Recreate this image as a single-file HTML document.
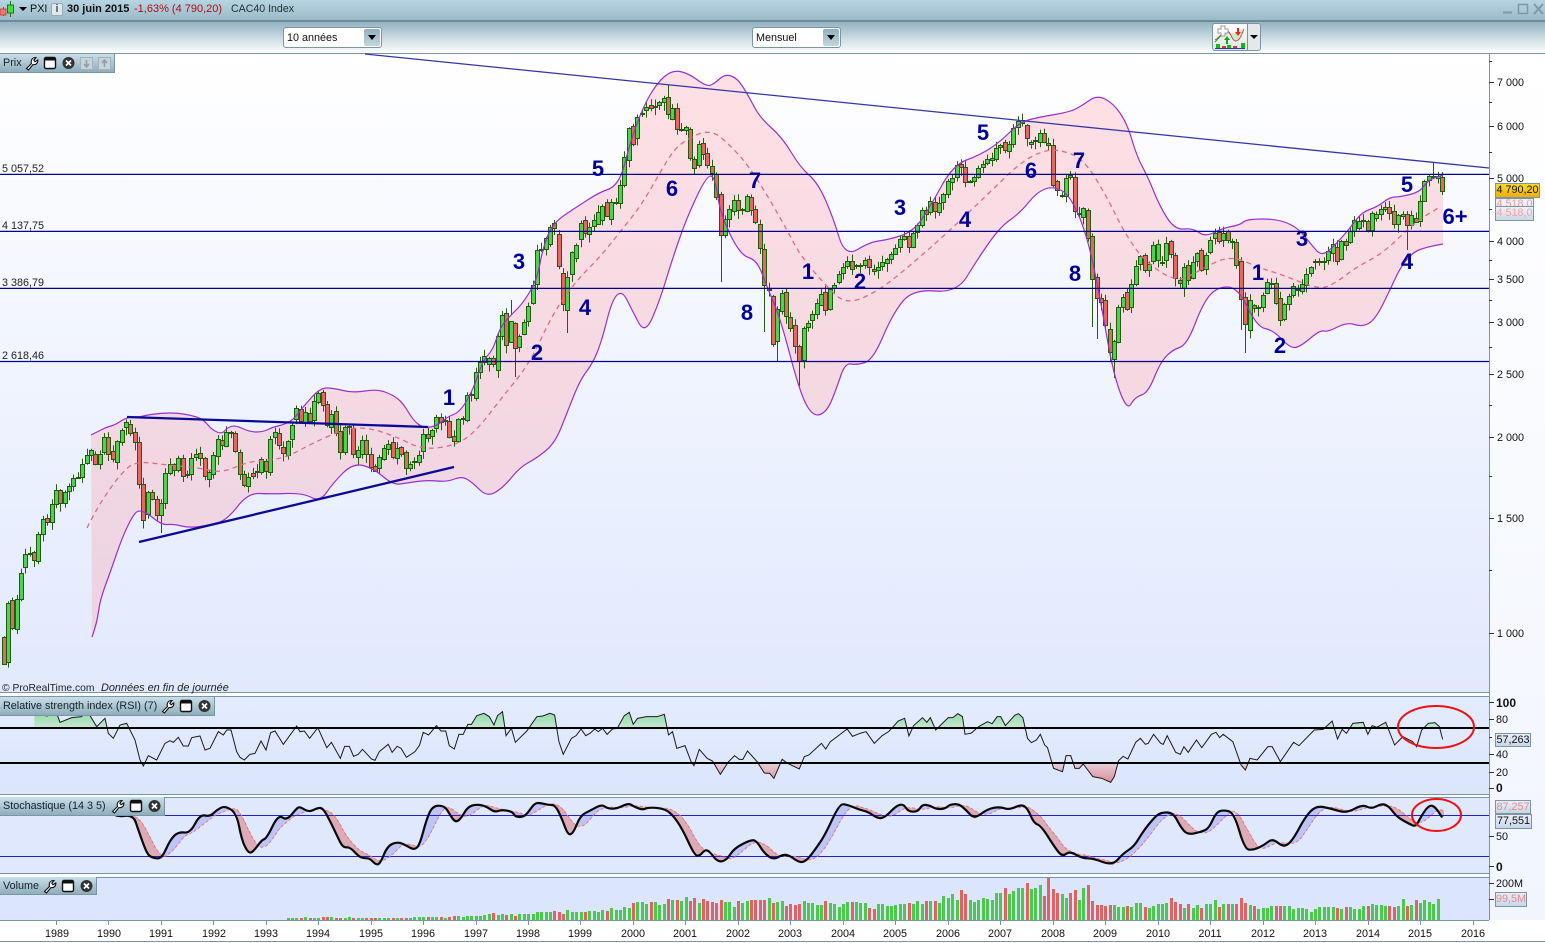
<!DOCTYPE html>
<html lang="fr"><head><meta charset="utf-8"><title>PXI CAC40 Index</title>
<style>
html,body{margin:0;padding:0;background:#fff}
body{width:1545px;height:943px;position:relative;overflow:hidden;font-family:"Liberation Sans",Arial,sans-serif;font-size:10.8px;color:#111}
.a{position:absolute}
#top{left:0;top:0;width:1545px;height:20px;background:linear-gradient(#b6d4e2,#9dbac8);border-bottom:2px solid #6f8a98}
#bar{left:0;top:22px;width:1545px;height:31px;background:linear-gradient(#94b2c1,#c4d6de 45%,#fff)}
.t{position:absolute;top:3px;white-space:nowrap;line-height:13px}
.sel{position:absolute;top:27px;height:19px;background:#fff;border:1px solid #7a95a3;border-radius:3px;line-height:21px;text-indent:3px}
.sel i{position:absolute;right:1px;top:1px;width:16px;height:17px;background:linear-gradient(#8fb0c0,#c3d6df);border-radius:2px}
.sel i:after{content:"";position:absolute;left:4px;top:6px;border:4px solid transparent;border-top:5px solid #000;border-bottom:0}
.lab{position:absolute;left:0;height:18px;background:linear-gradient(#c9dfe9,#8fadbc);border-right:1px solid #7a95a3;border-bottom:1px solid #7a95a3;line-height:19px;text-indent:3px;white-space:nowrap;color:#14242c}
.lab svg{position:absolute;top:2px;left:0;text-indent:0}
.box{position:absolute;border:1px solid #7a95a3;background:linear-gradient(#e9eff9,#c8d6e6);line-height:13px;text-align:center;white-space:nowrap}
</style></head>
<body>
<svg class="a" id="s" style="left:0;top:0" width="1545" height="943" viewBox="0 0 1545 943" font-family="Liberation Sans, Arial, sans-serif">
<defs>
<linearGradient id="gp" x1="0" y1="0" x2="0" y2="1"><stop offset="0" stop-color="#fff"/><stop offset="1" stop-color="#e1e9fd"/></linearGradient>
<linearGradient id="gr" x1="0" y1="0" x2="0" y2="1"><stop offset="0" stop-color="#e3ecff"/><stop offset="1" stop-color="#dbe5fb"/></linearGradient>
<linearGradient id="gx" x1="0" y1="0" x2="0" y2="1"><stop offset="0" stop-color="#fff"/><stop offset="1" stop-color="#f1f5fe"/></linearGradient>
<linearGradient id="gg" gradientUnits="userSpaceOnUse" x1="0" y1="712" x2="0" y2="728"><stop offset="0" stop-color="#92d9a6"/><stop offset="1" stop-color="#c4e8d2"/></linearGradient>
<linearGradient id="gd" gradientUnits="userSpaceOnUse" x1="0" y1="763" x2="0" y2="782"><stop offset="0" stop-color="#e6cfdc"/><stop offset="1" stop-color="#dc8f99"/></linearGradient>
<clipPath id="cu"><rect x="0" y="697" width="1489" height="31"/></clipPath>
<clipPath id="cd"><rect x="0" y="763" width="1489" height="31"/></clipPath>
<g id="wr"><path d="M1.5 12.5L6.5 7.5C5.5 4.5 7 1.5 11 1.5L8.8 4.2 10 5.8 12.8 4C13 7.5 10.5 9.2 8 8.5L3.5 14Z" fill="#fff" stroke="#111" stroke-width="1.1"/></g>
<g id="wn"><rect x=".5" y="1.5" width="11" height="11" rx="1.5" fill="#fff" stroke="#111" stroke-width="1.4"/><rect x="1" y="2" width="10" height="2.5" fill="#111"/></g>
<g id="xx"><circle cx="6.5" cy="7" r="6" fill="#333"/><path d="M4 4.5L9 9.5M9 4.5L4 9.5" stroke="#fff" stroke-width="1.8"/></g>
</defs>
<rect x="0" y="53" width="1545" height="889" fill="#fff"/>
<rect x="0" y="54" width="1489" height="638" fill="url(#gp)"/>
<rect x="1490" y="54" width="55" height="866" fill="url(#gx)"/>
<rect x="0" y="697" width="1489" height="97" fill="url(#gr)"/>
<rect x="0" y="798" width="1489" height="75" fill="#dfe8fd"/>
<rect x="0" y="878" width="1489" height="42" fill="#dbe5fc"/>
<g fill="none" stroke="#7a95a3" stroke-width="1">
<path d="M0 53.5H1545M1489.5 54V920M0 692.5H1489M0 696.5H1489M0 794.5H1489M0 797.5H1489M0 873.5H1489M0 877.5H1489M0 920.5H1489M0 941.5H1545"/>
</g>
<g id="fill"></g><g id="cand"></g><g id="bands"></g>
<g stroke="#00008b" stroke-width="1.2"><path d="M0 174.4H1489M0 231.4H1489M0 288.4H1489M0 361.5H1489"/></g>
<path d="M365 54L1489 168" stroke="#3434a8" stroke-width="1.3"/>
<path d="M127 417L428 427" stroke="#0a0a96" stroke-width="2.3"/>
<path d="M139 542L454 467" stroke="#0a0a96" stroke-width="2.3"/>
<g fill="#222" font-size="10.8">
<text x="2" y="172">5 057,52</text><text x="2" y="229">4 137,75</text><text x="2" y="286">3 386,79</text><text x="2" y="359">2 618,46</text>
</g>
<g font-weight="bold" font-size="22" fill="#00009a" text-anchor="middle">
<text x="598" y="176">5</text><text x="672" y="196">6</text><text x="755" y="188">7</text><text x="519" y="269">3</text><text x="585" y="315">4</text><text x="537" y="360">2</text><text x="449" y="405">1</text><text x="747" y="320">8</text><text x="808" y="279">1</text><text x="860" y="289">2</text><text x="900" y="215">3</text><text x="965" y="227">4</text><text x="983" y="140">5</text><text x="1031" y="178">6</text><text x="1079" y="168">7</text><text x="1075" y="281">8</text><text x="1302" y="246">3</text><text x="1258" y="280">1</text><text x="1280" y="353">2</text><text x="1407" y="192">5</text><text x="1407" y="269">4</text><text x="1455" y="224">6+</text>
</g>
<text x="2" y="691" font-size="10.3" fill="#222">© ProRealTime.com</text>
<text x="101" y="691" font-size="10.9" fill="#222" font-style="italic">Données en fin de journée</text>
<g id="rsi"></g>
<path d="M0 728H1489M0 763H1489" stroke="#000" stroke-width="2"/>
<g id="stf"></g>
<path d="M0 815.5H1489M0 856.5H1489" stroke="#2222cc" stroke-width="1"/>
<g id="st"></g>
<g id="vol"></g>
<ellipse cx="1436" cy="727" rx="38" ry="21" fill="none" stroke="#ee1111" stroke-width="2"/>
<ellipse cx="1436.5" cy="815" rx="24.5" ry="16" fill="none" stroke="#ee1111" stroke-width="2"/>
<g stroke="#333" stroke-width="1" fill="none">
<path d="M1489 82.5h5M1489 126.5h5M1489 178.5h5M1489 241.5h5M1489 279.5h5M1489 322.5h5M1489 374.5h5M1489 437.5h5M1489 518.5h5M1489 633.5h5M1489 61.5h3M1489 102.5h3M1489 152.5h3M1489 209.5h3M1489 260.5h3M1489 300.5h3M1489 347.5h3M1489 405.5h3M1489 476.5h3M1489 570.5h3"/>
<path d="M1489 702.5h5M1489 719.5h5M1489 737.5h3M1489 754.5h5M1489 772.5h5M1489 788.5h5M1489 836.5h5M1489 866.5h5M1489 883.5h5M1489 899.5h5"/>
</g>
<g font-size="10.8" fill="#111">
<text x="1497" y="86">7 000</text><text x="1497" y="130">6 000</text><text x="1497" y="182">5 000</text><text x="1497" y="245">4 000</text><text x="1497" y="283">3 500</text><text x="1497" y="326">3 000</text><text x="1497" y="378">2 500</text><text x="1497" y="441">2 000</text><text x="1497" y="522">1 500</text><text x="1497" y="637">1 000</text>
<text x="1496" y="707" font-weight="bold" font-size="12">100</text><text x="1496" y="723">80</text><text x="1496" y="758">40</text><text x="1496" y="776">20</text><text x="1496" y="792" font-weight="bold" font-size="12">0</text>
<text x="1496" y="840">50</text><text x="1496" y="871" font-weight="bold" font-size="12">0</text><text x="1496" y="887">200M</text>
</g>
<g font-size="10.8" fill="#111" text-anchor="middle">
<text x="57" y="937">1989</text><text x="109" y="937">1990</text><text x="161" y="937">1991</text><text x="214" y="937">1992</text><text x="266" y="937">1993</text><text x="318" y="937">1994</text><text x="371" y="937">1995</text><text x="423" y="937">1996</text><text x="476" y="937">1997</text><text x="528" y="937">1998</text><text x="580" y="937">1999</text><text x="633" y="937">2000</text><text x="685" y="937">2001</text><text x="738" y="937">2002</text><text x="790" y="937">2003</text><text x="843" y="937">2004</text><text x="895" y="937">2005</text><text x="948" y="937">2006</text><text x="1000" y="937">2007</text><text x="1053" y="937">2008</text><text x="1105" y="937">2009</text><text x="1158" y="937">2010</text><text x="1210" y="937">2011</text><text x="1263" y="937">2012</text><text x="1315" y="937">2013</text><text x="1368" y="937">2014</text><text x="1420" y="937">2015</text><text x="1473" y="937">2016</text>
</g>
<path stroke="#7a95a3" d="M56.5 921v4M108.5 921v4M161.5 921v4M213.5 921v4M266.5 921v4M318.5 921v4M371.5 921v4M423.5 921v4M476.5 921v4M528.5 921v4M580.5 921v4M633.5 921v4M685.5 921v4M738.5 921v4M790.5 921v4M843.5 921v4M895.5 921v4M948.5 921v4M1000.5 921v4M1053.5 921v4M1105.5 921v4M1158.5 921v4M1210.5 921v4M1263.5 921v4M1315.5 921v4M1368.5 921v4M1420.5 921v4M1473.5 921v4"/>
</svg>

<div class="a" id="top">
<svg class="a" style="left:0;top:0" width="30" height="20"><path d="M3.5 7v9" stroke="#c33" /><rect x="0" y="9" width="6" height="6" fill="#ee7777" stroke="#c33" stroke-width=".8"/><path d="M10.500 1v16" stroke="#1a7a1a"/><rect x="7.500" y="5" width="6" height="8" fill="#44dd44" stroke="#1a7a1a"/><path d="M19 7h8l-4 4z" fill="#000"/></svg>
<span class="t" style="left:30px">PXI</span>
<span class="t" style="left:51px;top:3px;width:10px;height:11px;background:#dfe8ec;border:1px solid #9aaab2;border-radius:2px;text-align:center;font-weight:bold;color:#555;line-height:11px">i</span>
<span class="t" style="left:67px;font-weight:bold;font-size:11px">30 juin 2015</span>
<span class="t" style="left:134px;color:#b01010;font-size:11px">-1,63% (4 790,20)</span>
<span class="t" style="left:231px;color:#1c2e38;font-size:10.6px">CAC40 Index</span>
<svg class="a" style="left:1500px;top:2px" width="45" height="14" fill="none" stroke="#7f98a6"><path d="M3 10.500h9" stroke-width="2"/><rect x="18.500" y="2.500" width="9" height="9" stroke-width="1.500"/><path d="M34 2l9 10M43 2l-9 10" stroke-width="2"/></svg>
</div>
<div class="a" id="bar"></div>
<div class="sel" style="left:283px;width:97px">10 années<i></i></div>
<div class="sel" style="left:752px;width:87px">Mensuel<i></i></div>
<div class="a" style="left:1212px;top:23px;width:47px;height:26px;border:1px solid #7a95a3;border-radius:3px;background:linear-gradient(#fff,#dfe6ea);overflow:hidden">
<svg width="47" height="26"><rect x="35" y="0" width="12" height="26" fill="#e4e8ea"/><path d="M34.500 0v26" stroke="#7a95a3"/><path d="M37 11h8l-4 4z" fill="#000"/><path d="M2 16C6 14 10 7 14 7S19 18 23 17 28 12 31 5" fill="#c8eec8" stroke="#dd2222" stroke-width=".8"/><path d="M2 18C6 14 10 8 14 9" fill="none" stroke="#22aa22"/><path d="M5 5h3V2h4v3h3v4h-3v3H8V9H5z" fill="#fff" stroke="#999"/><path d="M24 4v4h-2l3 4 3-4h-2V4z" fill="#ee2222"/><path d="M13 20v-4h-2l3-4 3 4h-2v4z" fill="#11aa11"/><rect x="3" y="20" width="4" height="4" fill="#11bb11"/><rect x="9" y="22" width="4" height="2" fill="#dd3344"/><rect x="14" y="21" width="4" height="3" fill="#11bb11"/><rect x="20" y="22" width="4" height="2" fill="#dd3344"/><rect x="28" y="19" width="4" height="5" fill="#11bb11"/><path d="M2 24.500h30" stroke="#3333bb"/></svg>
</div>

<div class="lab" style="top:54px;width:114px">Prix
<svg width="114" height="15"><use href="#wr" x="25"/><use href="#wn" x="44"/><use href="#xx" x="62"/><rect x="80.500" y="1.500" width="12" height="12" fill="#c5d3da" stroke="#a2b3bc"/><path d="M86.500 4v6M84 8l2.500 3L89 8" stroke="#8d9ea7" fill="none" stroke-width="1.500"/><rect x="98.500" y="1.500" width="12" height="12" fill="#c5d3da" stroke="#a2b3bc"/><path d="M104.500 11V5M102 7l2.500-3L107 7" stroke="#8d9ea7" fill="none" stroke-width="1.500"/></svg></div>
<div class="lab" style="top:697px;width:214px">Relative strength index (RSI) (7)
<svg width="214" height="15"><use href="#wr" x="161"/><use href="#wn" x="180"/><use href="#xx" x="198"/></svg></div>
<div class="lab" style="top:797px;width:164px">Stochastique (14 3 5)
<svg width="164" height="15"><use href="#wr" x="111"/><use href="#wn" x="130"/><use href="#xx" x="148"/></svg></div>
<div class="lab" style="top:877px;width:96px;height:17px">Volume
<svg width="96" height="15"><use href="#wr" x="43"/><use href="#wn" x="62"/><use href="#xx" x="80"/></svg></div>

<div class="box" style="left:1495px;top:183px;width:43px;height:13px;background:linear-gradient(#ffdc20,#efae00);color:#111">4 790,20</div>
<div class="box" style="left:1495px;top:198px;width:37px;height:9px;line-height:11px;color:#ee9aa0;overflow:hidden;background:#eef1f6">4 518,0</div>
<div class="box" style="left:1495px;top:206px;width:37px;height:13px;color:#f3a3a6;background:linear-gradient(#eef2f7,#ccd8e4)">4 518,0</div>
<div class="box" style="left:1495px;top:733px;width:34px;height:12px;line-height:12px">57,263</div>
<div class="box" style="left:1495px;top:800px;width:34px;height:12px;line-height:12px;color:#e58b8f">87,257</div>
<div class="box" style="left:1495px;top:814px;width:35px;height:13px">77,551</div>
<div class="box" style="left:1495px;top:892px;width:30px;height:13px;color:#e58b8f">99,5M</div>

<script>
(function(){
var G=function(i){return document.getElementById(i)};
function P(a,ox,oy,sx,sy){return a.trim().split(/\s+/).map(function(t){var v=t.split(',');return[ox+v[0]/sx,oy+v[1]/sy]})}
function sm(p){var d='M'+p[0];for(var i=1;i<p.length-1;i++){d+='Q'+p[i]+' '+((p[i][0]+p[i+1][0])/2)+','+((p[i][1]+p[i+1][1])/2)}return d+'L'+p[p.length-1]}
var U=P("91,435 97,432 107,427 115,425 127,417 140,417 147,415 163,413 177,413 190,415 203,419 212,430 222,434 227,428 235,425 250,432 263,432 273,427 283,425 293,420 303,407 320,388 333,388 353,393 377,389 393,395 403,403 413,420 423,428 437,426 447,417 460,412 473,390 483,360 493,350 500,327 513,313 523,303 537,280 543,247 553,223 575,208 600,192 613,188 622,175 630,143 643,107 657,83 672,70 688,73 707,87 715,83 725,74 737,78 747,93 760,118 782,137 800,167 818,183 833,217 845,257 870,242 887,240 913,232 930,207 953,165 980,155 1000,142 1020,122 1040,117 1070,112 1083,105 1097,95 1113,103 1127,123 1137,157 1148,177 1160,207 1175,230 1193,228 1205,237 1223,228 1240,225 1247,219 1277,219 1297,227 1310,243 1322,257 1337,243 1350,228 1362,212 1377,207 1390,197 1400,197 1420,192 1428,180 1443,175",0,0,1,1);
var L=P("92,637 97,623 100,600 110,573 122,538 132,517 138,510 147,513 162,525 173,524 190,528 210,525 227,520 248,493 270,494 303,493 320,502 333,483 353,463 373,468 393,485 407,483 427,480 447,482 462,476 473,483 487,497 503,488 520,467 537,458 555,443 567,413 580,380 593,363 602,340 612,300 622,290 632,310 645,335 660,300 672,260 687,217 707,175 715,177 720,213 740,255 757,260 767,287 780,317 800,393 813,417 827,412 837,387 845,363 857,365 873,360 893,313 913,289 957,293 977,260 1000,227 1020,213 1037,192 1053,186 1070,195 1087,235 1100,297 1113,373 1127,411 1135,397 1148,393 1160,363 1172,350 1187,345 1203,303 1217,287 1238,287 1257,327 1273,330 1290,348 1300,347 1320,330 1328,332 1347,322 1362,327 1375,320 1390,290 1400,268 1413,252 1427,247 1443,244",0,0,1,1);
var M=P("87,528 95,512 107,493 120,475 135,461 167,465 200,468 222,473 247,462 270,460 287,457 313,443 347,428 370,428 397,437 423,450 457,445 477,430 500,400 530,363 553,313 577,280 600,257 620,232 643,203 667,160 680,143 710,128 733,148 750,168 770,200 787,230 800,255 827,287 847,305 880,290 913,263 947,233 987,195 1020,163 1040,152 1057,149 1083,158 1107,197 1123,230 1143,260 1177,283 1200,270 1230,255 1260,268 1283,275 1320,290 1337,282 1355,268 1383,253 1407,230 1423,217 1440,207",0,0,1,1);
G('fill').innerHTML='<path d="'+sm(U)+'L'+sm(L.slice().reverse()).slice(1)+'Z" fill="#ff9fa8" fill-opacity=".31"/>';
G('bands').innerHTML='<g fill="none" stroke-linejoin="round"><path d="'+sm(U)+'" stroke="#9a30cc" stroke-width="1.2"/><path d="'+sm(L)+'" stroke="#9a30cc" stroke-width="1.2"/><path d="'+sm(M)+'" stroke="#dc6c86" stroke-width="1.3" stroke-dasharray="5 4"/></g>';
var D=[[0,380,"772r852 670g847 661r745 656g745 580g658 523g562 520g523 517r541 463g544 418g463 415r427 373g427 331g373 331r371 337g370 319g335 295g319 291g293 253g293 226g250 211g226 221r250 221g250 172g217 172r223 214r238 184g247 151g187 127g143 131r157 157r187 187r313 313r420 337g402 337r358 358r406 370g406 280g370 253g280 253r270 233g270 233r286 283g286 233g280 223g233 220r235 235r289 277g298 226g283 178g229 181r196 157g199 156g159 160r214 217r283 283r316 292g319 280r290 272g275"],
[59,220,"716g755 724r755 658g757 636g650 640r677 682r700 664g706 615g658 565g598 568r604 575g605 580r604 544g602 519g547 517r556 553r615 583g622 574r640 634r697 620g695 618g621 625r703 690g712 661g703 661r703 703r742 737r751 712g745 685g718 673g688 667r712 685g715 682r703 697r745 733g745 723g726 706g727 643g694 643r655 631g650 592g625 590r605 600g603 604r652 649r664 598g664 594g597 525g601 523g526 457g535 427g457 409g427 415g433 415r432 349g451 286g349 280r376 304g367 310r385 349g382 307g343 259g304 196g250 91g193 88g90 55g88 22g73 10r25 43r139 160r252 172g271 97g163 76g115 10g58 0r40 22g42 0g19"],
[136,60,"455g490 437g480 425r467 427g478 426g429 375g428 292g375 205g302 197r250 172g235 158g161 142g150 134r142 138g141 127g137 115g127 112r163 145g178 145r208 208g211 200g208 208r296 298r325 253g316 248r280 280r317 319r341 341r410 403r525 476g523 448g478 421g454 421r451 447g450 409g454 412r451 448r488 493r565"],
[174,100,"448r557 568g571 589r733 626g721 580g635 577r650 652r685 676r738 737r783 685g781 670g682 643g661 610g643 583g615 577r631 568g628 556g565 523g547 502g520 484g499 482r505 495g498 495g498 481g496 478r502 508r514 502g512 487g499 478g490 463g478 443g460 418g442 409g418 409r442 398g439 376g397 331g376 331r343 304g337 307r334 310g337 283g307 244g283 235g247 196g232 193r202 202r247 243g246 232g244 205g232 193g202 178g190 175g180 145g178 136g142 127r151 133g154 85g133 64g82"],
[233,80,"120g128 136r175 187g193 179g182 160g187 160r187 190r196 196r317 304r331 344g347 295g348 286r292 292r394 399g402 385g412 391r475 469r598 592r655 655r667 661r736 748r817 784g838 682g787 652g682 637r688 613g682 559g613 529g553 526r571 553g571 496g544 493g541 545g548 490g541 484r523 526r595 601r610 562g625 556r601 547g595 520g544 511r571 526g568 481g517 460g475 457r484 460g481 454r481 483g486 487r556 544r658 652r733 661g751 676r685 681g684 646g682 607g640 609g612 610r670 655r721 673g718 649g673 619g646 627g630 613g634 583g616 562g580 543g546 543g546 543g546 514g541 493g520 500r541 484g538 484r496 454g487 421g454 424g445"],
[311,150,"211g214 212r240 190g240 193g206 176g190 170g176 170r187 184r224 196g224 191g196 193r227 195g224 203r215 154g215 92g151 79g92 77g80 77g82 80r121"]];
var E={36:[0,533],116:[0,300],117:[0,377],129:[0,333],152:[85,0],164:[0,282],174:[0,332],177:[0,361],182:[0,386],249:[0,327],250:[0,339],254:[0,378],283:[0,330],284:[0,353],321:[0,250],327:[162,0],329:[0,195]};
var w='',bg='',br='',col=[];
D.forEach(function(g){var i=g[0],re=/(\d+)([rg])(\d+)/g,m;while(m=re.exec(g[2])){
var t=g[1]+m[1]/3,b=g[1]+m[3]/3,X=Math.round(3.5+4.372*i),hi=t-((i*7919%13)/13*6+1),lo=b+((i*104729%17)/17*8+1);
if(E[i]){hi=E[i][0]||hi;lo=E[i][1]||lo}
w+='M'+(X+.5)+' '+hi.toFixed(1)+'V'+lo.toFixed(1);
var T=Math.round(t)+.5,H=Math.max(1,Math.round(b-t));
var r='M'+(X-1.5)+' '+T+'h4v'+H+'h-4z';
if(m[2]=='r')br+=r;else bg+=r;col[i]=m[2];i++}});
G('cand').innerHTML='<path d="'+w+'" stroke="#2a5a10" fill="none"/><path d="'+bg+'" fill="#4fd24f" stroke="#1f5c10"/><path d="'+br+'" fill="#e06a60" stroke="#1f5c10"/>';
/* RSI */
var R=P("103,90 120,100 140,108 170,100 180,127 215,113 245,110 260,90 290,140 315,115 325,160 340,175 360,135 380,130 405,180 420,240 430,258 445,227 470,240 495,190 510,182 520,187 535,172 550,198 565,198 575,173 600,168 615,210 630,205 655,155 670,165 680,150 693,150 710,215 720,232 733,240 750,223 765,220 783,183 798,210 812,158 825,153 850,193 890,138 900,155",0,680,3,3)
.concat(P("12,108 27,130 50,98 75,158 88,142 113,190 125,154 138,154 150,184 163,178 175,163 200,192 210,196 222,170 247,148 258,172 272,154 283,160 298,187 322,170 335,150 345,112 360,120 382,92 395,108 408,108 418,152 432,162 445,118 457,118 470,88 480,88 495,62 515,55 530,65 543,90 553,62 567,50 577,122 592,100 603,142 635,108 663,65 680,63 700,55 713,60 725,140 737,178 760,130 773,122 787,102 800,122 812,115 825,102 835,110 847,100 860,118 875,102 888,100 908,62 922,52 933,88 945,70 970,65 1000,65 1020,58 1032,120 1043,110 1055,160 1078,152 1095,200 1103,212 1118,163 1140,190 1155,198 1177,238 1200,200 1217,182 1230,193 1240,193 1253,168 1280,200 1300,234 1315,235 1327,250 1350,193 1365,205 1398,222 1412,185 1425,180 1460,145 1472,162 1485,140 1510,120 1532,102 1547,124",300,695,2.8,3))
.concat(P("28,115 45,110 68,145 90,122 108,110 135,78 153,70 165,123 178,92 203,68 215,82 225,68 240,105 275,68 288,68 302,56 315,65 322,118 340,114 360,95 385,80 398,86 412,65 422,65 435,92 462,60 472,56 484,68 497,130 508,143 522,135 533,118 545,150 553,158 570,220 595,230 605,182 618,182 630,220 642,220 653,207 680,245 705,250 730,262 740,245 752,197 765,184 778,192 800,142 813,130 827,148 835,145 850,118 870,145 877,148 888,122 912,172 925,178 935,155 947,172 970,135 985,158 1012,118 1025,112 1035,128 1045,118 1072,140 1095,210 1107,225 1120,190 1140,195 1170,155 1182,155 1205,200 1242,142 1257,152 1300,105 1325,103 1350,78 1365,132 1378,103 1390,115 1408,85 1437,82 1450,118 1462,92 1475,97 1500,82 1525,150 1548,125",850,695,2.8,3))
.concat(P("218,155 230,170 245,120 265,100 285,98 298,110 308,148",1340,690,3,3));
var rs='M'+R.join('L');var n=R.length-1;
G('rsi').innerHTML='<path clip-path="url(#cu)" d="'+rs+'L'+R[n][0]+',728L'+R[0][0]+',728Z" fill="url(#gg)"/><path clip-path="url(#cd)" d="'+rs+'L'+R[n][0]+',763L'+R[0][0]+',763Z" fill="url(#gd)"/><path d="'+rs+'" fill="none" stroke="#1a1a1a" stroke-width="1"/>';
/* Stochastic */
var K=P("345,405 355,410 400,405 415,450 440,520 455,533 485,537 510,480 535,455 570,460 600,403 630,410 650,390 675,377 710,400 725,480 745,520 760,515 785,480 800,475 835,403 860,422 890,385 900,380",0,680,3,3)
.concat(P("25,352 50,338 65,340 85,380 105,425 120,458 140,456 165,485 180,490 195,490 213,510 225,505 245,452 275,440 300,453 320,465 335,450 355,370 372,332 405,332 420,360 435,382 450,372 470,335 495,328 520,333 545,352 565,344 595,350 603,366 630,366 655,326 670,323 695,330 715,330 735,375 750,420 765,415 785,362 810,348 845,328 860,340 885,342 920,324 935,335 960,345 975,337 1015,340 1040,355 1070,400 1105,482 1120,482 1133,465 1145,467 1170,502 1195,495 1215,460 1265,433 1280,440 1300,475 1327,495 1360,473 1400,505 1420,495 1445,460 1470,420 1510,328 1530,328",300,695,2.8,3))
.concat(P("28,345 50,350 80,372 100,365 130,332 150,327 163,350 190,350 203,328 225,332 240,342 265,342 280,328 305,327 325,345 348,372 385,342 420,335 445,345 480,328 497,340 515,385 535,392 575,460 595,485 615,468 650,490 680,490 735,512 765,475 795,455 820,410 850,370 870,352 905,353 925,395 945,420 985,410 1005,400 1025,352 1045,345 1075,352 1105,463 1130,465 1160,450 1183,430 1215,458 1240,435 1275,365 1305,332 1345,340 1390,355 1435,328 1460,342 1490,325 1510,335 1530,365 1568,388",850,695,2.8,3))
.concat(P("228,410 245,375 268,345 285,350 305,380",1340,690,3,3));
function kAt(x){if(x<=K[0][0])return K[0][1];for(var i=1;i<K.length;i++){if(x<=K[i][0]){var a=K[i-1],b=K[i];return a[1]+(b[1]-a[1])*(x-a[0])/(b[0]-a[0])}}return K[K.length-1][1]}
var f1='',f2='',dd=[];
for(var x=K[0][0];x<=1443;x+=1){var s=0;for(var j=0;j<5;j++)s+=kAt(x-j*4.37);var d=s/5,k=kAt(x);dd.push([x,+d.toFixed(1)]);
var r='M'+x.toFixed(1)+' '+Math.min(k,d).toFixed(1)+'h1V'+Math.max(k,d).toFixed(1)+'h-1z';if(k<d)f1+=r;else f2+=r}
G('stf').innerHTML='<path d="'+f1+'" fill="#bcc4fa"/><path d="'+f2+'" fill="#dcabb6"/>';
G('st').innerHTML='<path d="M'+dd.join('L')+'" fill="none" stroke="#e8787c" stroke-dasharray="3 2"/><path d="'+sm(K)+'" fill="none" stroke="#0a0a0a" stroke-width="2.2" stroke-linejoin="round" stroke-linecap="round"/>';
/* Volume */
var V="2 2 2 2 3 2 2 2 3 3 3 2 2 2 3 2 2 2 2 2 2 2 2 2 2 2 2 2 2 3 3 3 3 3 3 3 2 3 4 4 3 4 4 4 4 5 6 7 5 6 5 6 4 6 6 6 6 8 8 8 8 9 8 6 10 8 8 8 8 9 9 8 10 9 12 10 10 13 12 17 18 18 16 18 18 15 16 21 20 20 19 23 19 22 17 21 19 18 17 20 18 18 13 19 17 19 20 20 20 20 22 17 18 19 14 16 15 16 19 17 17 15 15 19 17 16 13 16 18 18 18 17 17 12 11 16 16 14 14 15 16 16 17 16 19 16 19 19 19 17 24 22 26 20 30 26 20 18 20 22 21 20 27 27 32 26 29 32 32 37 31 32 35 24 42 31 27 26 22 27 30 20 32 35 19 15 15 14 15 15 13 13 14 13 17 17 13 12 14 16 16 17 22 18 16 12 16 12 15 12 16 16 20 13 16 16 16 16 22 17 15 14 11 12 12 14 14 14 14 14 11 12 12 11 8 11 13 13 13 13 12 11 13 13 11 11 14 14 16 15 15 14 14 13 14 21 14 15 20 17 20 18 16 21".split(' ');
var vg='',vr='';V.forEach(function(h,q){var i=65+q,X=Math.round(3.5+4.372*i)-1,s='M'+X+' '+(920-h)+'h3V920h-3z';if(col[i]=='r')vr+=s;else vg+=s});
G('vol').innerHTML='<path d="'+vg+'" fill="#4cc94c"/><path d="'+vr+'" fill="#dd6464"/>';
})();
</script>
</body></html>
